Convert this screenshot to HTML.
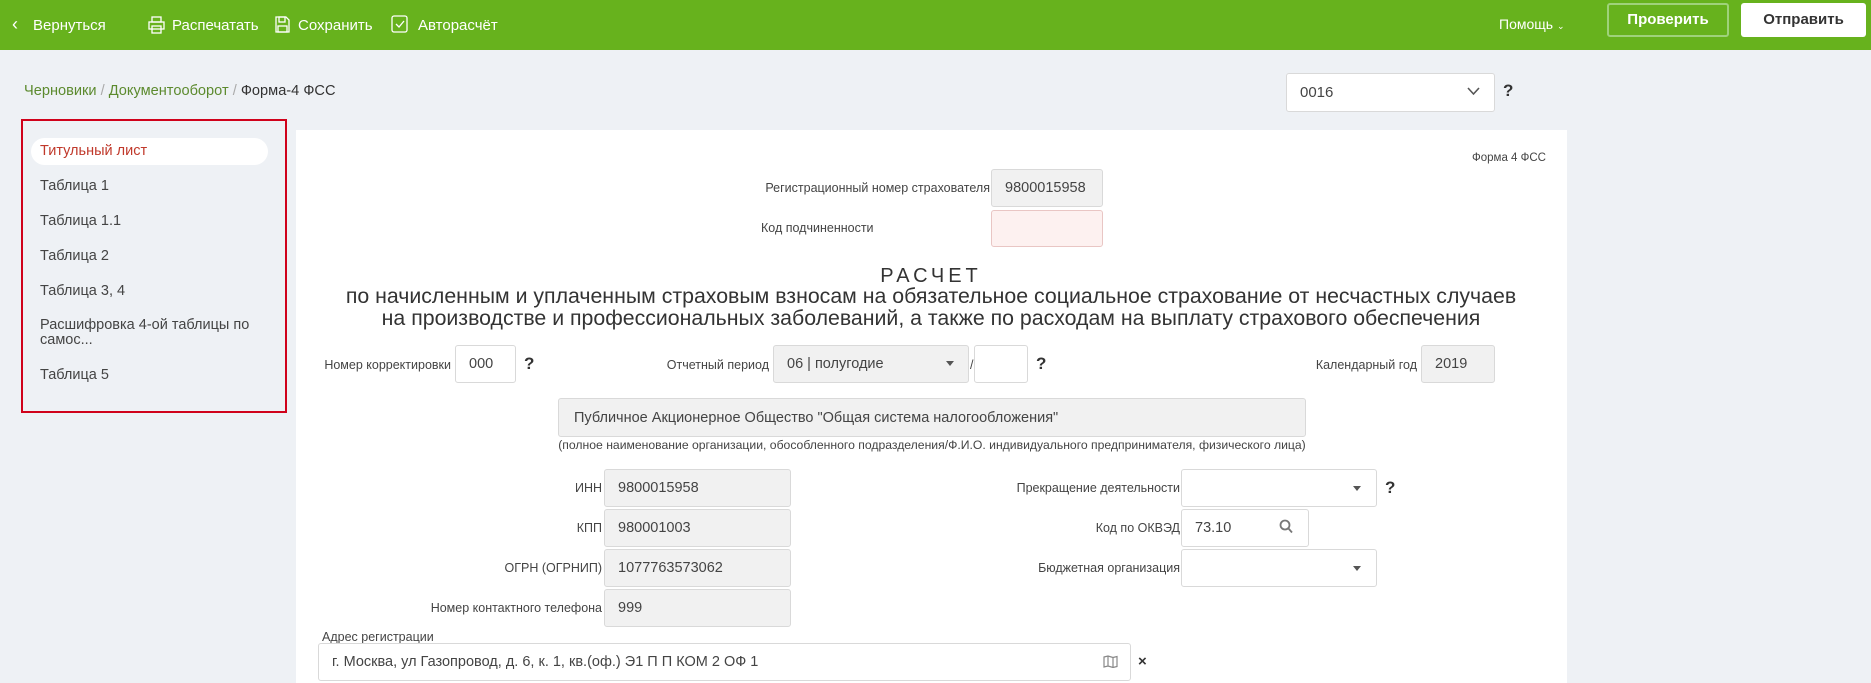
<!DOCTYPE html>
<html><head><meta charset="utf-8"><style>
*{box-sizing:border-box;margin:0;padding:0}
body{width:1871px;height:683px;overflow:hidden;background:#eef1f5;font-family:"Liberation Sans",sans-serif;color:#333;position:relative}
.a{position:absolute;white-space:nowrap}
.top{position:absolute;left:0;top:0;width:1871px;height:50px;background:#67b21d}
.tw{color:#fff;font-size:15px;top:17px}
.lbl{font-size:12.5px;color:#444;text-align:right}
.in{position:absolute;border:1px solid #d9d9d9;border-radius:3px;background:#fff;font-size:14.5px;color:#444;padding-left:13px;display:flex;align-items:center}
.g{background:#f1f1f1}
.q{font-weight:bold;font-size:17px;color:#333}
.menu{font-size:14.5px;color:#444;left:40px}
.caret{position:absolute;width:0;height:0;border-left:4px solid transparent;border-right:4px solid transparent;border-top:5px solid #555}
</style></head><body>
<div class="top"></div>
<div class="a tw" style="left:12px;top:14px;font-size:18px">‹</div>
<div class="a tw" style="left:33px">Вернуться</div>
<svg class="a" style="left:148px;top:16px" width="17" height="18" viewBox="0 0 17 18" fill="none" stroke="#fff" stroke-width="1.3"><rect x="4" y="1" width="9" height="5"/><rect x="1" y="6" width="15" height="7"/><rect x="4" y="10" width="9" height="7"/></svg>
<div class="a tw" style="left:172px">Распечатать</div>
<svg class="a" style="left:275px;top:16px" width="15" height="17" viewBox="0 0 15 17" fill="none" stroke="#fff" stroke-width="1.3"><path d="M1 1h10l3 3v12H1z"/><rect x="4" y="1" width="6" height="5"/><rect x="3" y="10" width="9" height="6"/></svg>
<div class="a tw" style="left:298px">Сохранить</div>
<svg class="a" style="left:391px;top:15px" width="17" height="18" viewBox="0 0 17 18" fill="none" stroke="#fff" stroke-width="1.3"><rect x="1" y="1" width="15" height="16" rx="2"/><path d="M5 9l3 3 5-6"/></svg>
<div class="a tw" style="left:418px">Авторасчёт</div>
<div class="a tw" style="left:1499px;top:16px;font-size:14px">Помощь <span style="font-size:9px">⌄</span></div>
<div class="a" style="left:1607px;top:3px;width:122px;height:34px;border:2px solid #9fd27a;border-radius:3px;color:#fff;font-weight:bold;font-size:15px;text-align:center;line-height:30px">Проверить</div>
<div class="a" style="left:1741px;top:3px;width:125px;height:34px;background:#fff;border-radius:3px;color:#333;font-weight:bold;font-size:15px;text-align:center;line-height:34px">Отправить</div>

<div class="a" style="left:24px;top:83px;font-size:14.6px;color:#5c8a2e">Черновики <span style="color:#aaa">/</span> Документооборот <span style="color:#aaa">/</span> <span style="color:#333">Форма-4 ФСС</span></div>
<div class="in" style="left:1286px;top:73px;width:209px;height:39px;font-size:15px">0016</div>
<svg class="a" style="left:1467px;top:87px" width="13" height="9" viewBox="0 0 13 9" fill="none" stroke="#555" stroke-width="1.6"><path d="M1 1l5.5 6 5.5-6"/></svg>
<div class="a q" style="left:1503px;top:81px">?</div>

<div class="a" style="left:21px;top:119px;width:266px;height:294px;border:2px solid #d0021b"></div>
<div class="a" style="left:31px;top:138px;width:237px;height:27px;background:#fff;border-radius:14px"></div>
<div class="a menu" style="top:143px;color:#c0392b">Титульный лист</div>
<div class="a menu" style="top:178px">Таблица 1</div>
<div class="a menu" style="top:213px">Таблица 1.1</div>
<div class="a menu" style="top:248px">Таблица 2</div>
<div class="a menu" style="top:283px">Таблица 3, 4</div>
<div class="a menu" style="top:318px;line-height:15px">Расшифровка 4-ой таблицы по<br>самос...</div>
<div class="a menu" style="top:367px">Таблица 5</div>

<div class="a" style="left:296px;top:130px;width:1271px;height:553px;background:#fff"></div>
<div class="a lbl" style="left:1440px;top:152px;width:106px;font-size:11.5px">Форма 4 ФСС</div>
<div class="a lbl" style="left:700px;top:181px;width:290px">Регистрационный номер страхователя</div>
<div class="in g" style="left:991px;top:169px;width:112px;height:38px">9800015958</div>
<div class="a lbl" style="left:761px;top:221px;text-align:left">Код подчиненности</div>
<div class="in" style="left:991px;top:210px;width:112px;height:37px;background:#fdf1f0;border-color:#e9c6c4"></div>

<div class="a" style="left:330px;top:265px;width:1202px;text-align:center;font-size:20px;letter-spacing:4px;color:#333">РАСЧЕТ</div>
<div class="a" style="left:300px;top:285px;width:1262px;text-align:center;font-size:21.3px;line-height:22px;color:#333">по начисленным и уплаченным страховым взносам на обязательное социальное страхование от несчастных случаев<br>на производстве и профессиональных заболеваний, а также по расходам на выплату страхового обеспечения</div>

<div class="a lbl" style="left:300px;top:358px;width:151px">Номер корректировки</div>
<div class="in" style="left:455px;top:345px;width:61px;height:38px">000</div>
<div class="a q" style="left:524px;top:354px">?</div>
<div class="a lbl" style="left:620px;top:358px;width:149px">Отчетный период</div>
<div class="in g" style="left:773px;top:345px;width:196px;height:38px">06 | полугодие</div>
<div class="caret" style="left:946px;top:361px"></div>
<div class="a lbl" style="left:970px;top:358px;text-align:left">/</div>
<div class="in" style="left:974px;top:345px;width:54px;height:38px"></div>
<div class="a q" style="left:1036px;top:354px">?</div>
<div class="a lbl" style="left:1280px;top:358px;width:137px">Календарный год</div>
<div class="in g" style="left:1421px;top:345px;width:74px;height:38px">2019</div>

<div class="in g" style="left:558px;top:398px;width:748px;height:39px;padding-left:15px">Публичное Акционерное Общество "Общая система налогообложения"</div>
<div class="a" style="left:520px;top:438px;width:824px;text-align:center;font-size:12.2px;color:#444">(полное наименование организации, обособленного подразделения/Ф.И.О. индивидуального предпринимателя, физического лица)</div>

<div class="a lbl" style="left:400px;top:481px;width:202px">ИНН</div>
<div class="in g" style="left:604px;top:469px;width:187px;height:38px">9800015958</div>
<div class="a lbl" style="left:400px;top:521px;width:202px">КПП</div>
<div class="in g" style="left:604px;top:509px;width:187px;height:38px">980001003</div>
<div class="a lbl" style="left:400px;top:561px;width:202px">ОГРН (ОГРНИП)</div>
<div class="in g" style="left:604px;top:549px;width:187px;height:38px">1077763573062</div>
<div class="a lbl" style="left:400px;top:601px;width:202px">Номер контактного телефона</div>
<div class="in g" style="left:604px;top:589px;width:187px;height:38px">999</div>

<div class="a lbl" style="left:960px;top:481px;width:220px">Прекращение деятельности</div>
<div class="in" style="left:1181px;top:469px;width:196px;height:38px"></div>
<div class="caret" style="left:1353px;top:486px"></div>
<div class="a q" style="left:1385px;top:478px">?</div>
<div class="a lbl" style="left:960px;top:521px;width:220px">Код по ОКВЭД</div>
<div class="in" style="left:1181px;top:509px;width:128px;height:38px">73.10</div>
<svg class="a" style="left:1279px;top:519px" width="14" height="15" viewBox="0 0 14 15" fill="none" stroke="#777" stroke-width="1.8"><circle cx="6" cy="6" r="4.5"/><path d="M9.5 9.5l3.5 4"/></svg>
<div class="a lbl" style="left:960px;top:561px;width:220px">Бюджетная организация</div>
<div class="in" style="left:1181px;top:549px;width:196px;height:38px"></div>
<div class="caret" style="left:1353px;top:566px"></div>

<div class="a lbl" style="left:322px;top:630px;text-align:left">Адрес регистрации</div>
<div class="in" style="left:318px;top:643px;width:813px;height:38px">г. Москва, ул Газопровод, д. 6, к. 1, кв.(оф.) Э1 П П КОМ 2 ОФ 1</div>
<svg class="a" style="left:1103px;top:655px" width="15" height="13" viewBox="0 0 15 13" fill="none" stroke="#888" stroke-width="1.2"><path d="M1 2l4-1 5 1.5 4-1v10l-4 1-5-1.5-4 1z M5 1v10 M10 2.5v10"/></svg>
<div class="a" style="left:1138px;top:653px;font-weight:bold;font-size:15px;color:#333">×</div>
</body></html>
